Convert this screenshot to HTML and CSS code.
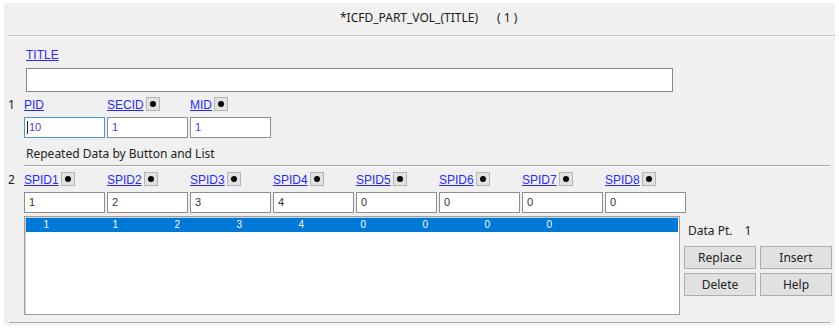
FILE: index.html
```html
<!DOCTYPE html>
<html>
<head>
<meta charset="utf-8">
<link rel="stylesheet" href="styles.css">
</head>
<body>
<div class="panel">
  <div class="header"><span>*ICFD_PART_VOL_(TITLE)</span><span class="count">( 1 )</span></div>
  <div class="rule-top"></div>

  <div class="title-block">
    <a class="lbl" href="#">TITLE</a>
    <div class="title-input"></div>
  </div>

  <div class="row r1">
    <div class="num">1</div>
    <div class="cols">
      <div class="cell"><a class="lbl" href="#">PID</a></div>
      <div class="cell"><a class="lbl" href="#">SECID</a><span class="dot"></span></div>
      <div class="cell"><a class="lbl" href="#">MID</a><span class="dot"></span></div>
    </div>
  </div>
  <div class="row inputs">
    <div class="num"></div>
    <div class="cols">
      <div class="field focus blue"><span class="caret"></span>10</div>
      <div class="field blue">1</div>
      <div class="field blue">1</div>
    </div>
  </div>

  <div class="section">Repeated Data by Button and List</div>
  <div class="rule-mid"></div>

  <div class="row r2">
    <div class="num">2</div>
    <div class="cols">
      <div class="cell"><a class="lbl" href="#">SPID1</a><span class="dot"></span></div>
      <div class="cell"><a class="lbl" href="#">SPID2</a><span class="dot"></span></div>
      <div class="cell"><a class="lbl" href="#">SPID3</a><span class="dot"></span></div>
      <div class="cell"><a class="lbl" href="#">SPID4</a><span class="dot"></span></div>
      <div class="cell"><a class="lbl" href="#">SPID5</a><span class="dot"></span></div>
      <div class="cell"><a class="lbl" href="#">SPID6</a><span class="dot"></span></div>
      <div class="cell"><a class="lbl" href="#">SPID7</a><span class="dot"></span></div>
      <div class="cell"><a class="lbl" href="#">SPID8</a><span class="dot"></span></div>
    </div>
  </div>
  <div class="row inputs">
    <div class="num"></div>
    <div class="cols">
      <div class="field">1</div>
      <div class="field">2</div>
      <div class="field">3</div>
      <div class="field">4</div>
      <div class="field">0</div>
      <div class="field">0</div>
      <div class="field">0</div>
      <div class="field">0</div>
    </div>
  </div>

  <div class="list-area">
    <div class="listbox">
      <div class="sel-row">
        <span class="v first">1</span><span class="v">1</span><span class="v">2</span><span class="v">3</span><span class="v">4</span><span class="v">0</span><span class="v">0</span><span class="v">0</span><span class="v">0</span>
      </div>
    </div>
    <div class="side">
      <div class="datapt"><span>Data Pt.</span><span class="dp-val">1</span></div>
      <div class="btns">
        <div class="btn">Replace</div>
        <div class="btn">Insert</div>
        <div class="btn">Delete</div>
        <div class="btn">Help</div>
      </div>
    </div>
  </div>
  <div class="rule-bottom"></div>
</div>
</body>
</html>
```

FILE: styles.css
```css
html, body {
  margin: 0;
  padding: 0;
  background: #ffffff;
}
body {
  font-family: "Noto Sans", "Liberation Sans", sans-serif;
  font-size: 12px;
  color: #222;
}
.panel {
  margin: 3px 0 0 4px;
  width: 831px;
  height: 322px;
  background: #f0f0f0;
  overflow: hidden;
}
.header {
  height: 32px;
  box-sizing: border-box;
  padding-left: 336px;
  padding-top: 6px;
  line-height: 18px;
  font-size: 12px;
  color: #1a1a1a;
}
.header .count {
  margin-left: 19px;
}
.rule-top {
  margin-left: 4px;
  border-top: 1px solid #c4c4c4;
  border-bottom: 1px solid #f8f8f8;
}
.lbl {
  font-family: "Liberation Sans", sans-serif;
  font-size: 12px;
  color: #2a2aff;
  text-decoration: underline;
  line-height: 16px;
}
.title-block {
  padding-left: 22px;
  padding-top: 10px;
}
.title-block .lbl {
  display: block;
}
.title-input {
  margin-top: 5px;
  width: 647px;
  height: 24px;
  box-sizing: border-box;
  background: #fff;
  border: 1px solid #8a8a8a;
}
.row {
  display: flex;
  padding-left: 4px;
}
.num {
  width: 16px;
  line-height: 16px;
  color: #222;
}
.cols {
  display: flex;
  gap: 2px;
}
.r1 {
  margin-top: 5px;
}
.r2 {
  margin-top: 5px;
}
.cell {
  width: 81px;
  height: 16px;
  display: flex;
  align-items: center;
}
.dot {
  width: 14px;
  height: 14px;
  box-sizing: border-box;
  margin-left: 2px;
  background: #e2e2e2;
  border: 1px solid #b4b4b4;
  display: flex;
  align-items: center;
  justify-content: center;
  position: relative;
  top: -1px;
}
.dot::after {
  content: "";
  width: 6px;
  height: 6px;
  border-radius: 50%;
  background: #000;
}
.inputs {
  margin-top: 4px;
}
.field {
  width: 81px;
  height: 21px;
  box-sizing: border-box;
  background: #fff;
  border: 1px solid #8e8e8e;
  padding-left: 4px;
  font-family: "Liberation Sans", sans-serif;
  font-size: 11px;
  line-height: 19px;
  color: #333;
  display: flex;
  align-items: center;
}
.field.blue {
  color: #4a3ee0;
}
.field.focus {
  border-color: #4c96d8;
  padding-left: 2px;
}
.caret {
  width: 1px;
  height: 13px;
  background: #222;
  margin-right: 1px;
}
.section {
  margin-top: 7px;
  padding-left: 22px;
  line-height: 18px;
  color: #222;
}
.rule-mid {
  margin: 2px 5px 0 20px;
  border-top: 1px solid #a8a8a8;
  border-bottom: 1px solid #fafafa;
}
.list-area {
  display: flex;
  margin-top: 3px;
  padding-left: 20px;
}
.listbox {
  width: 656px;
  height: 99px;
  box-sizing: border-box;
  background: #fff;
  border: 1px solid #a0a0a0;
  box-shadow: inset 1px 1px 0 #d0d0d0;
  padding: 1px;
}
.sel-row {
  height: 14px;
  background: #0078d7;
  color: #fff;
  display: flex;
  font-family: "Liberation Sans", sans-serif;
  font-size: 10px;
  line-height: 14px;
}
.sel-row .v {
  width: 62px;
  text-align: right;
  flex: none;
}
.sel-row .v.first {
  width: 23px;
  margin-right: 7px;
}
.side {
  margin-left: 4px;
  display: flex;
  flex-direction: column;
}
.datapt {
  margin-top: 7px;
  padding-left: 4px;
  line-height: 16px;
  color: #222;
}
.dp-val {
  margin-left: 12px;
}
.btns {
  margin-top: 7px;
  display: grid;
  grid-template-columns: 72px 72px;
  gap: 4px;
}
.btn {
  height: 23px;
  box-sizing: border-box;
  background: #e1e1e1;
  border: 1px solid #adadad;
  text-align: center;
  line-height: 21px;
  color: #222;
}
.rule-bottom {
  margin: 7px 5px 0 5px;
  border-top: 1px solid #a8a8a8;
  border-bottom: 1px solid #fafafa;
}
```
